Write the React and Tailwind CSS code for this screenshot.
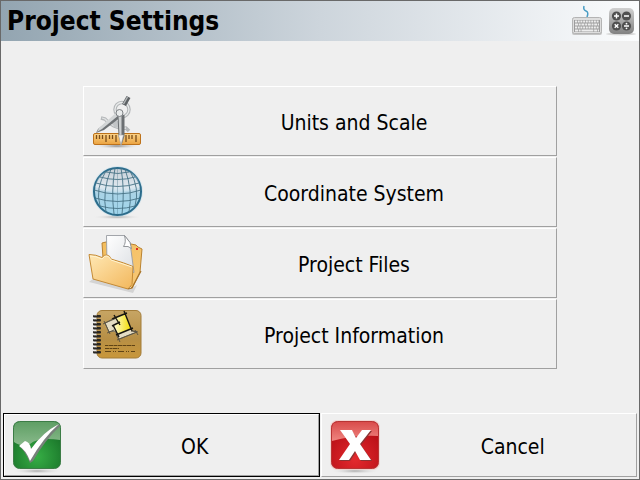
const CompassIcon = () => (
  <svg viewBox="0 0 60 60" className="size-15 shrink-0" aria-hidden="true">
    <defs>
      <linearGradient id="ruler" x1="0" y1="0" x2="0" y2="1">
        <stop offset="0" stopColor="#fbd48a" />
        <stop offset="1" stopColor="#eba23f" />
      </linearGradient>
      <radialGradient id="rulerShadow">
        <stop offset="0" stopColor="#8a8a8a" />
        <stop offset="1" stopColor="#efefef" stopOpacity="0" />
      </radialGradient>
    </defs>
    <ellipse cx="29" cy="55" rx="24" ry="3" fill="url(#rulerShadow)" />
    <path d="M13 27l4 1q3 4 9 7 6 3 12 2l3 3" fill="none" stroke="#b4b7b9" strokeWidth="3.500" />
    <path d="M14 27l3 1q3 4 9 7 6 3 12 2" fill="none" stroke="#e2e4e5" strokeWidth="1.300" />
    <path d="M23 28l3 8 5 1 4-6z" fill="#c2c5c7" />
    <circle cx="34" cy="18.500" r="7" fill="none" stroke="#b3b6b8" strokeWidth="3.500" />
    <circle cx="34" cy="18.500" r="7" fill="none" stroke="#e9ebeb" strokeWidth="1.300" />
    <rect x="5.500" y="42.500" width="47" height="11" rx="1.500" fill="url(#ruler)" stroke="#bd721b" />
    <path
      d="M8.500 44v4M11.500 44v4M14.500 44v4M18 44v7M21.500 44v4M24.500 44v4M28 44v7M38 44v7M41 44v4M44 44v4M48 44v7"
      stroke="#7a4d1a"
      strokeWidth="1.300"
    />
    <path d="M30 22l3 4-17 13-8 3 2-4z" fill="#6f7376" />
    <path d="M29 21l2 3-17 14-5 3 2-4z" fill="#d3d6d7" />
    <path d="M29.500 24h7v21l-3 9-3-9z" fill="#6c7073" />
    <path d="M30.500 24h3v21h-2z" fill="#cdd0d1" />
    <path d="M30.500 44h5l-2.500 10z" fill="#f4f4f4" stroke="#a6a6a6" strokeWidth=".6" />
    <circle cx="31.500" cy="22" r="3.500" fill="#e9ebeb" stroke="#7c8083" />
    <path d="M36 14l4.500-8" stroke="#5d6164" strokeWidth="4.500" />
    <path d="M35.500 13l4-7" stroke="#b3b7b9" strokeWidth="1.500" />
  </svg>
);

const GlobeIcon = () => (
  <svg viewBox="0 0 60 60" className="size-15 shrink-0" aria-hidden="true">
    <defs>
      <linearGradient id="globe" x1="0" y1="0" x2="0" y2="1">
        <stop offset="0" stopColor="#b5bfc9" />
        <stop offset=".4" stopColor="#d3e0e9" />
        <stop offset=".55" stopColor="#a9d3e6" />
        <stop offset="1" stopColor="#9fd5ec" />
      </linearGradient>
      <radialGradient id="globeGlow">
        <stop offset=".88" stopColor="#7fb9d6" />
        <stop offset="1" stopColor="#b9dcec" stopOpacity="0" />
      </radialGradient>
      <radialGradient id="globeShadow">
        <stop offset="0" stopColor="#aaa" />
        <stop offset="1" stopColor="#efefef" stopOpacity="0" />
      </radialGradient>
    </defs>
    <ellipse cx="29" cy="55" rx="25" ry="2.500" fill="url(#globeShadow)" />
    <circle cx="29.500" cy="29.500" r="26" fill="url(#globeGlow)" />
    <circle cx="29.500" cy="29.500" r="23.500" fill="url(#globe)" stroke="#2c6c8b" strokeWidth="2" />
    <path d="M7 25q22 10 45 0Q50 8 29.500 7 10 8 7 25" fill="#fff" opacity=".25" />
    <g fill="none" stroke="#477386" strokeWidth=".9">
      <path d="M29.500 6v47" opacity=".4" />
      <path d="M27 6q-4 23-1 46M33 6q4 23 1 46M23 7q-9 22-5 43M37 7q8 22 4 43M18 9Q7 26 12 44M42 9q10 17 5 35" />
      <path d="M18 10q12 3 23 0M12 15q18 5 35 0M8 21q22 7 43 0M6 28q24 8 47 0M7 36q23 7 45 0M12 44q18 5 35 0" />
    </g>
  </svg>
);

const FolderIcon = () => (
  <svg viewBox="0 0 60 60" className="size-15 shrink-0" aria-hidden="true">
    <defs>
      <linearGradient id="folder" x1="0" y1="0" x2="1" y2="1">
        <stop offset="0" stopColor="#ffe8b4" />
        <stop offset="1" stopColor="#f2b75c" />
      </linearGradient>
      <linearGradient id="folderBack" x1="0" y1="0" x2="1" y2="1">
        <stop offset="0" stopColor="#f3bd5c" />
        <stop offset="1" stopColor="#f7c877" />
      </linearGradient>
      <linearGradient id="paper" x1="0" y1="0" x2="1" y2="1">
        <stop offset="0" stopColor="#fff" />
        <stop offset="1" stopColor="#dcdfe3" />
      </linearGradient>
    </defs>
    <path d="M1 49l5-4 38 10 5-3-4 8z" fill="#d4d4d4" />
    <path
      d="M14 10l4-1 25 2 5 1 2 2 4 2-2 23-8 16-29-30z"
      fill="url(#folderBack)"
      stroke="#b98230"
      strokeLinejoin="round"
    />
    <path d="M18.500 2.500h18l5.500 7 4 30-27-8z" fill="url(#paper)" stroke="#999ca1" strokeWidth=".9" />
    <path d="M36.500 2.500q2 7-1 11 5-1 8 2l-1.500-6z" fill="#fff" stroke="#888b90" strokeWidth=".9" />
    <path
      d="M1 21.500q7 0 13 3 2-3 5-2.500 3 .5 4 4 14 4 22 7.500l-1 18-4 4.500L5 46z"
      fill="url(#folder)"
      stroke="#c48a35"
      strokeLinejoin="round"
    />
    <path d="M2 23q6 0 12 3 3-4 5-3 3 1 4 4l21 7" fill="none" stroke="#fff3d0" />
    <path d="M53 38l-9 17-4 1" fill="none" stroke="#a87428" strokeWidth="1.200" />
    <rect x="48" y="15" width="2" height="2" fill="#e02f22" />
  </svg>
);

const NotebookIcon = () => (
  <svg viewBox="0 0 60 60" className="size-15 shrink-0" aria-hidden="true">
    <defs>
      <linearGradient id="cover" x1="0" y1="0" x2="0" y2="1">
        <stop offset="0" stopColor="#c7a564" />
        <stop offset=".6" stopColor="#b78f45" />
        <stop offset="1" stopColor="#c9973a" />
      </linearGradient>
      <linearGradient id="room" x1="0" y1="0" x2="1" y2="0">
        <stop offset="0" stopColor="#fffbd0" />
        <stop offset="1" stopColor="#f2dc00" />
      </linearGradient>
    </defs>
    <rect x="9" y="6.500" width="44" height="47.500" rx="5" fill="url(#cover)" stroke="#a37c38" />
    {[12, 16, 20, 24, 28, 32, 36, 40, 44, 48].map((y) => (
      <g key={y}>
        <rect x="5" y={y - 1} width="8" height="2.500" rx="1" fill="#292724" />
        <rect x="6" y={y - 1} width="3" height="1" fill="#76716a" />
      </g>
    ))}
    <path d="M17 19l19-8 7 15 6 2-18 7-4-8-6 1z" fill="#e4dcc4" stroke="#76705f" />
    <path d="M27 14l10-4 6 15-13 5-4-9 4-2z" fill="url(#room)" />
    <path
      d="M24 15l15-6M36 7l8 20M45 24l-17 7M31 33l-6-12M24 22l8-4M32 21l-6-10"
      fill="none"
      stroke="#17150f"
      strokeWidth="1.400"
    />
    <path d="M15 20l10-5M16 17l6 13M19 29l7-3M43 27l7 1M47 26l3 5M29 36l20-8M29 32l3 6" stroke="#5d5543" />
    <g stroke="#5f4315" strokeWidth="1.100">
      <path d="M17 41.500h30" strokeDasharray="3 .5 5 .5" />
      <path d="M17 44.500h14" strokeDasharray="4 .5 3 .5" />
      <path d="M17 47.500h30" strokeDasharray="6 2 1 1 1 2" />
    </g>
  </svg>
);

const OkIcon = () => (
  <svg viewBox="0 0 60 60" className="size-15 shrink-0" aria-hidden="true">
    <defs>
      <radialGradient id="green" cx=".5" cy=".75" r=".65">
        <stop offset="0" stopColor="#36ae45" />
        <stop offset="1" stopColor="#197329" />
      </radialGradient>
      <linearGradient id="greenGloss" x1="0" y1="0" x2="0" y2="1">
        <stop offset="0" stopColor="#5f9f65" />
        <stop offset="1" stopColor="#88b98a" />
      </linearGradient>
      <radialGradient id="okShadow">
        <stop offset="0" stopColor="#aaa" />
        <stop offset="1" stopColor="#efefef" stopOpacity="0" />
      </radialGradient>
    </defs>
    <ellipse cx="29" cy="56" rx="25" ry="3" fill="url(#okShadow)" />
    <rect x="5.500" y="6.500" width="47" height="47" rx="6" fill="url(#green)" stroke="#3c7c46" />
    <path d="M6 27V13q0-6 6-6h34q6 0 6 6v12q-22-3-30 4-10 3-16-2" fill="url(#greenGloss)" />
    <path d="M12 32l5-5q5 1 6 7Q35 17 51 9l1 2Q37 25 25 46l-3 2Q17 36 12 32" fill="#77817a" />
    <path d="M11 31l6-5q5 1 6 8Q35 17 51 9 35 23 22 46q-4-11-11-15" fill="#fff" />
  </svg>
);

const CancelIcon = () => (
  <svg viewBox="0 0 60 60" className="size-15 shrink-0" aria-hidden="true">
    <defs>
      <radialGradient id="red" cx=".5" cy=".8" r=".7">
        <stop offset="0" stopColor="#e32a2e" />
        <stop offset="1" stopColor="#b80f16" />
      </radialGradient>
      <linearGradient id="redGloss" x1="0" y1="0" x2="0" y2="1">
        <stop offset="0" stopColor="#d94c4b" />
        <stop offset="1" stopColor="#ef8580" />
      </linearGradient>
      <radialGradient id="cancelShadow">
        <stop offset="0" stopColor="#aaa" />
        <stop offset="1" stopColor="#efefef" stopOpacity="0" />
      </radialGradient>
    </defs>
    <ellipse cx="29" cy="56" rx="25" ry="3" fill="url(#cancelShadow)" />
    <rect x="4" y="5" width="50" height="50" rx="7" fill="#f5c4bf" opacity=".6" />
    <rect x="5.500" y="6.500" width="47" height="47" rx="6" fill="url(#red)" stroke="#b83434" />
    <path d="M6 24V13q0-6 6-6h34q6 0 6 6v8Q27 20 6 26" fill="url(#redGloss)" />
    <path d="M15 16h11l5 8 6-8h9L35 30l11 16H35l-5-9-6 9H14l11-16z" fill="#8b3434" />
    <path d="M14 15h12l4 8 6-8h9L34 29l11 16H34l-5-9-6 9H13l11-16z" fill="#fff" />
  </svg>
);

const KeyboardIcon = () => (
  <svg viewBox="0 0 32 32" className="size-8" aria-hidden="true">
    <path d="M13 1q-1 4 2 5t1 6" fill="none" stroke="#4a9dc4" strokeWidth="1.500" />
    <rect x="1" y="13" width="30" height="17" rx="2" fill="#c4c4c4" />
    <rect x="1.500" y="12.500" width="29" height="16" rx="2" fill="#dedede" stroke="#b4b4b4" />
    <rect x="3" y="15" width="26" height="12" fill="#9c9c9c" />
    <g stroke="#ededed" strokeWidth="2">
      <path d="M4 16.500h24" strokeDasharray="2 .7" />
      <path d="M4 19.500h24" strokeDasharray="3 .7 2 .7" />
      <path d="M4 22.500h24" strokeDasharray="2 .7" />
      <path d="M4 25.500h24" strokeDasharray="3 .7 2 .7 12 .7" />
    </g>
  </svg>
);

const CalculatorIcon = () => (
  <svg viewBox="0 0 32 32" className="size-8" aria-hidden="true">
    <defs>
      <linearGradient id="calc" x1="0" y1="0" x2="0" y2="1">
        <stop offset="0" stopColor="#d0d0d0" />
        <stop offset="1" stopColor="#818181" />
      </linearGradient>
    </defs>
    <ellipse cx="16" cy="29" rx="15" ry="1.500" fill="#d6d6d6" />
    <rect x="4" y="3" width="25" height="26" rx="5" fill="url(#calc)" />
    <g fill="#505050">
      <circle cx="11.500" cy="11" r="4.600" />
      <circle cx="21.500" cy="11" r="4.600" />
      <circle cx="11.500" cy="21" r="4.600" />
      <circle cx="21.500" cy="21" r="4.600" />
    </g>
    <path
      d="M9 11h5M11.500 8.500v5M19 11h5M9.700 19.200l3.600 3.600M13.300 19.200l-3.600 3.600M19 21h5"
      stroke="#fff"
      strokeWidth="1.400"
    />
    <circle cx="21.500" cy="18.700" r=".9" fill="#fff" />
    <circle cx="21.500" cy="23.300" r=".9" fill="#fff" />
  </svg>
);

const menuItems = [
  { label: "Units and Scale", Icon: CompassIcon },
  { label: "Coordinate System", Icon: GlobeIcon },
  { label: "Project Files", Icon: FolderIcon },
  { label: "Project Information", Icon: NotebookIcon },
];

const raised = "border border-t-white border-l-white border-r-[#a0a0a0] border-b-[#a0a0a0]";

const ButtonContent = ({ Icon, label }) => (
  <>
    <Icon />
    <span className="flex-1 pt-1 pl-1 text-center">{label}</span>
  </>
);

const App = () => {
  return (
    <div className="flex min-h-screen flex-col border border-[#696969] bg-[#efefef] font-['Tahoma','DejaVu_Sans_Condensed','DejaVu_Sans',sans-serif] text-[21px] leading-7 text-black">
      <header className="flex h-10 items-center justify-between bg-linear-to-r from-[#93a5b1] via-[#cdd5dc] to-[#fbfcfd] pr-0.5 pl-1.5">
        <h1 className="text-[26px] leading-10 font-bold">Project Settings</h1>
        <div className="flex gap-0.5">
          <button type="button" aria-label="Keyboard">
            <KeyboardIcon />
          </button>
          <button type="button" aria-label="Calculator">
            <CalculatorIcon />
          </button>
        </div>
      </header>

      <main className="flex flex-1 flex-col justify-center gap-px px-[82px]">
        {menuItems.map(({ label, Icon }) => (
          <button key={label} type="button" className={`flex h-[70px] items-center pl-1 ${raised}`}>
            <ButtonContent Icon={Icon} label={label} />
          </button>
        ))}
      </main>

      <footer className="grid grid-cols-2 gap-px px-0.5 pb-0.5">
        <div className="flex border border-black">
          <button type="button" className={`flex h-[62px] flex-1 items-center pl-[3px] ${raised}`}>
            <ButtonContent Icon={OkIcon} label="OK" />
          </button>
        </div>
        <button type="button" className={`flex h-16 items-center pl-1 ${raised}`}>
          <ButtonContent Icon={CancelIcon} label="Cancel" />
        </button>
      </footer>
    </div>
  );
};

export default App;
